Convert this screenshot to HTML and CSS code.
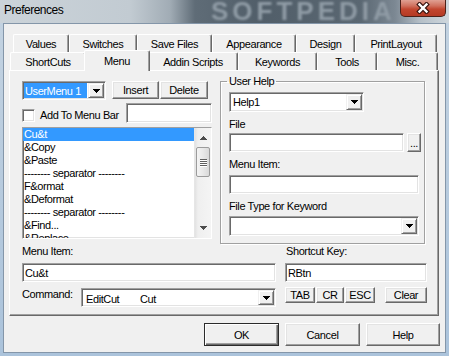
FILE: index.html
```html
<!DOCTYPE html>
<html lang="en">
<head>
    <meta charset="UTF-8">
    <title>Preferences</title>
    <link rel="stylesheet" href="styles.css">
</head>
<body>
<div class="window">
    <div class="titlebar">
        <span class="title">Preferences</span>
        <span class="bg-mark">SOFTPEDIA</span>
        <span class="close-btn">
            <svg width="14" height="12" viewBox="0 0 14 12">
                <path d="M3.5 2.5l7 7M10.5 2.5l-7 7" stroke="#3b1510" stroke-width="4.6" stroke-linecap="square"/>
                <path d="M3.5 2.5l7 7M10.5 2.5l-7 7" stroke="#fff" stroke-width="2.4" stroke-linecap="square"/>
            </svg>
        </span>
    </div>

    <div class="client">
        <div class="tabs">
            <div class="tab-row back">
                <div class="tab">Values</div>
                <div class="tab">Switches</div>
                <div class="tab">Save Files</div>
                <div class="tab">Appearance</div>
                <div class="tab">Design</div>
                <div class="tab">PrintLayout</div>
            </div>
            <div class="tab-row front">
                <div class="tab">ShortCuts</div>
                <div class="tab active">Menu</div>
                <div class="tab">Addin Scripts</div>
                <div class="tab">Keywords</div>
                <div class="tab">Tools</div>
                <div class="tab">Misc.</div>
            </div>

            <div class="tab-panel">
                <div class="upper">
                    <div class="left-col">
                        <div class="menu-row">
                            <div class="field combo usermenu">
                                <span class="combo-text"><span class="sel">UserMenu 1</span></span>
                                <span class="drop"><svg width="7" height="4"><path d="M0 0h7v1h-1v1h-1v1h-1v1h-1v-1h-1v-1h-1v-1h-1z"/></svg></span>
                            </div>
                            <button class="btn insert">Insert</button>
                            <button class="btn delete">Delete</button>
                        </div>
                        <div class="bar-row">
                            <span class="field checkbox"></span>
                            <span class="check-label">Add To Menu Bar</span>
                            <div class="field bar-name"></div>
                        </div>
                        <div class="field listbox">
                            <ul class="items">
                                <li class="selected">Cu&amp;t</li>
                                <li>&amp;Copy</li>
                                <li>&amp;Paste</li>
                                <li>-------- separator --------</li>
                                <li>F&amp;ormat</li>
                                <li>&amp;Deformat</li>
                                <li>-------- separator --------</li>
                                <li>&amp;Find...</li>
                                <li>&amp;Replace</li>
                            </ul>
                            <div class="scrollbar">
                                <div class="sb-btn"><svg width="7" height="4"><path d="M3 0h1v1h1v1h1v1h1v1h-7v-1h1v-1h1v-1h1z"/></svg></div>
                                <div class="sb-thumb"><span></span><span></span><span></span><span></span></div>
                                <div class="sb-btn down"><svg width="7" height="4"><path d="M0 0h7v1h-1v1h-1v1h-1v1h-1v-1h-1v-1h-1v-1h-1z"/></svg></div>
                            </div>
                        </div>
                    </div>

                    <fieldset class="group">
                        <legend>User Help</legend>
                        <div class="field combo help-combo">
                            <span class="combo-text">Help1</span>
                            <span class="drop"><svg width="7" height="4"><path d="M0 0h7v1h-1v1h-1v1h-1v1h-1v-1h-1v-1h-1v-1h-1z"/></svg></span>
                        </div>
                        <div class="label">File</div>
                        <div class="file-row">
                            <div class="field file-box"></div>
                            <button class="btn browse">...</button>
                        </div>
                        <div class="label">Menu Item:</div>
                        <div class="field wide-box"></div>
                        <div class="label">File Type for Keyword</div>
                        <div class="field combo type-combo">
                            <span class="combo-text"></span>
                            <span class="drop"><svg width="7" height="4"><path d="M0 0h7v1h-1v1h-1v1h-1v1h-1v-1h-1v-1h-1v-1h-1z"/></svg></span>
                        </div>
                    </fieldset>
                </div>

                <div class="lower">
                    <div class="label">Menu Item:</div>
                    <div class="label key-label">Shortcut Key:</div>
                    <div class="field text-box">Cu&amp;t</div>
                    <div class="field text-box">RBtn</div>
                    <div class="command">
                        <span class="cmd-label">Command:</span>
                        <div class="field combo cmd-combo">
                            <span class="combo-text"><span class="cmd-name">EditCut</span><span>Cut</span></span>
                            <span class="drop"><svg width="7" height="4"><path d="M0 0h7v1h-1v1h-1v1h-1v1h-1v-1h-1v-1h-1v-1h-1z"/></svg></span>
                        </div>
                    </div>
                    <div class="keys">
                        <button class="btn key-tab">TAB</button>
                        <button class="btn key-cr">CR</button>
                        <button class="btn key-esc">ESC</button>
                        <button class="btn key-clear">Clear</button>
                    </div>
                </div>
            </div>
        </div>

        <div class="dialog-buttons">
            <button class="btn dlg default">OK</button>
            <button class="btn dlg">Cancel</button>
            <button class="btn dlg help">Help</button>
        </div>
    </div>
</div>
</body>
</html>
```

FILE: styles.css
```css
/* General styles */
* {
    box-sizing: border-box;
}
body {
    margin: 0;
    font-family: "Liberation Sans", Arial, sans-serif;
    font-size: 11px;
    letter-spacing: -0.4px;
    color: #000;
}
.window {
    width: 449px;
    height: 356px;
    display: flex;
    flex-direction: column;
    background: linear-gradient(to bottom, #c4d3e1, #abc3db);
    overflow: hidden;
}

/* Title bar */
.titlebar {
    position: relative;
    height: 23px;
    flex: none;
    display: flex;
    align-items: flex-start;
    background: linear-gradient(to right, #cbd3d9 0, #c2cbd2 130px, #a1acb5 170px, #5f6c77 195px, #515e69 260px, #5a6772 360px, #7c8893 395px, #b5bfc7 420px, #cfd7dd 449px);
    overflow: hidden;
}
.title {
    position: relative;
    z-index: 1;
    font-size: 12px;
    letter-spacing: -0.5px;
    line-height: 13px;
    padding: 4px 0 0 4px;
}
.bg-mark {
    position: absolute;
    left: 211px;
    top: 0;
    font-size: 26px;
    line-height: 23px;
    font-weight: bold;
    letter-spacing: 4px;
    color: #8f9ba5;
    filter: blur(1px);
}
.close-btn {
    position: relative;
    z-index: 1;
    margin: -1px 3px 0 auto;
    width: 46px;
    height: 18px;
    border: 1px solid #4d2119;
    border-top: none;
    border-radius: 0 0 5px 5px;
    background: linear-gradient(to bottom, #e3a99c, #d0715e 40%, #c2462f 60%, #b53a24);
    display: flex;
    align-items: center;
    justify-content: center;
}

/* Client area */
.client {
    flex: 1;
    margin: 0 3px 3px;
    border: 1px solid #8496a9;
    background: #f0f0f0;
    display: flex;
    flex-direction: column;
    padding: 10px 5px 0 5px;
}
.tabs {
    width: 430px;
}
.tab-row {
    display: grid;
    height: 18px;
}
.tab-row.back {
    grid-template-columns: 56px 68px 75px 84px 59px 82px;
    margin-left: 4px;
}
.tab-row.front {
    grid-template-columns: 76px 62px 90px 79px 60px 61px;
    margin-left: 1px;
}
.tab {
    display: flex;
    align-items: center;
    justify-content: center;
    padding-top: 1px;
    background: #f0f0f0;
    border-top: 1px solid #fff;
    border-left: 1px solid #fff;
    border-right: 1px solid #696969;
    box-shadow: inset -1px 0 0 #a0a0a0;
    border-radius: 2px 2px 0 0;
    white-space: nowrap;
}
.tab.active {
    position: relative;
    z-index: 1;
    margin: -2px -2px -1px;
    padding-top: 0;
}
.tab-panel {
    height: 246px;
    border: 1px solid;
    border-color: #fff #696969 #696969 #fff;
    box-shadow: inset -1px -1px 0 #a0a0a0;
    padding: 10px 0 0 12px;
}

/* Common controls */
.field {
    background: #fff;
    border: 1px solid;
    border-color: #a0a0a0 #fff #fff #a0a0a0;
    box-shadow: inset 1px 1px 0 #696969, inset -1px -1px 0 #e3e3e3;
}
.combo {
    display: flex;
    padding: 1px;
}
.combo-text {
    flex: 1;
    display: flex;
    align-items: center;
    padding-left: 2px;
}
.drop {
    width: 16px;
    background: #f0f0f0;
    border: 1px solid;
    border-color: #f0f0f0 #696969 #696969 #f0f0f0;
    box-shadow: inset 1px 1px 0 #fff, inset -1px -1px 0 #a0a0a0;
    display: flex;
    align-items: center;
    justify-content: center;
}
.btn {
    font: inherit;
    letter-spacing: inherit;
    color: #000;
    background: #f0f0f0;
    border: 1px solid;
    border-color: #fff #696969 #696969 #fff;
    box-shadow: inset -1px -1px 0 #a0a0a0, inset 1px 1px 0 #e3e3e3;
    padding: 0;
    display: flex;
    align-items: center;
    justify-content: center;
}
.label {
    line-height: 13px;
    height: 13px;
}

/* Upper part */
.upper {
    display: flex;
    align-items: flex-start;
    gap: 8px;
    height: 163px;
}
.left-col {
    width: 190px;
    display: flex;
    flex-direction: column;
}
.menu-row {
    display: flex;
    align-items: flex-start;
    height: 19px;
}
.usermenu {
    width: 84px;
    height: 19px;
}
.usermenu .combo-text {
    padding-left: 0;
}
.usermenu .sel {
    flex: 1;
    align-self: stretch;
    display: flex;
    align-items: center;
    padding-left: 1px;
    margin-right: 1px;
    background: #3399ff;
    color: #fff;
}
.insert {
    width: 47px;
    height: 18px;
    margin-left: 6px;
}
.delete {
    width: 48px;
    height: 18px;
    margin-left: 1px;
}
.bar-row {
    display: flex;
    align-items: flex-start;
    height: 20px;
    margin-top: 3px;
}
.checkbox {
    width: 13px;
    height: 13px;
    margin-top: 6px;
}
.check-label {
    line-height: 13px;
    margin: 6px 0 0 5px;
}
.bar-name {
    width: 86px;
    height: 20px;
    margin-left: auto;
}
.listbox {
    display: flex;
    height: 112px;
    margin-top: 4px;
    overflow: hidden;
}
.items {
    flex: 1;
    list-style: none;
    margin: 0;
    padding: 0;
    overflow: hidden;
}
.items li {
    line-height: 13px;
    height: 13px;
    padding-left: 1px;
    white-space: nowrap;
}
.items li.selected {
    background: #3399ff;
    color: #fff;
}
.scrollbar {
    width: 17px;
    display: flex;
    flex-direction: column;
    background: linear-gradient(to right, #e2e2e2, #efefef 3px, #f4f4f4);
    border-left: 1px solid #e6e6e6;
}
.sb-btn {
    height: 17px;
    display: flex;
    justify-content: center;
    padding-top: 8px;
}
.sb-btn svg {
    fill: #4d4d4d;
}
.sb-btn.down {
    margin-top: auto;
    padding-top: 5px;
}
.sb-thumb {
    height: 30px;
    margin: 2px 1px 0;
    border: 1px solid #9b9b9b;
    border-radius: 2px;
    background: linear-gradient(to right, #f4f4f4, #e8e8e8 50%, #d9d9d9);
    display: flex;
    flex-direction: column;
    align-items: center;
    justify-content: center;
    gap: 1px;
}
.sb-thumb span {
    width: 7px;
    height: 1px;
    background: #5f5f5f;
    box-shadow: 0 1px 0 #fff;
}

/* User Help group */
.group {
    width: 205px;
    height: 169px;
    margin: -6px 0 0;
    padding: 0 0 0 8px;
    min-width: 0;
    border: 1px solid #a0a0a0;
    box-shadow: 1px 1px 0 #fff, inset 1px 1px 0 #fff;
}
.group legend {
    padding: 0 2px;
    margin-left: -2px;
    line-height: 12px;
}
.help-combo {
    width: 135px;
    height: 20px;
    margin-top: 5px;
}
.group .label {
    margin-top: 6px;
}
.file-row {
    display: flex;
    gap: 3px;
    margin-top: 2px;
}
.file-box {
    width: 175px;
    height: 19px;
}
.browse {
    width: 14px;
    height: 19px;
    align-items: flex-end;
    line-height: 12px;
    padding-bottom: 2px;
}
.wide-box {
    width: 190px;
    height: 19px;
    margin-top: 4px;
}
.type-combo {
    width: 190px;
    height: 20px;
    margin-top: 3px;
}

/* Lower part */
.lower {
    display: grid;
    grid-template-columns: 254px 142px;
    grid-template-rows: 13px 19px 19px;
    column-gap: 9px;
    row-gap: 5px;
    margin-top: 1px;
}
.key-label {
    padding-left: 1px;
}
.text-box {
    display: flex;
    align-items: center;
    padding-left: 2px;
}
.command {
    display: flex;
    align-items: flex-start;
}
.cmd-label {
    width: 59px;
    line-height: 13px;
    margin-top: 1px;
}
.cmd-combo {
    width: 195px;
    height: 19px;
    margin-top: 1px;
}
.cmd-combo .combo-text {
    padding: 2px 0 0 3px;
}
.cmd-name {
    width: 54px;
}
.keys {
    display: flex;
    align-items: flex-start;
    gap: 1px;
}
.keys .btn {
    height: 16px;
}
.key-tab,
.key-esc {
    width: 30px;
}
.key-cr {
    width: 28px;
}
.key-clear {
    width: 42px;
    margin-left: 9px;
}

/* Dialog buttons */
.dialog-buttons {
    display: flex;
    justify-content: flex-end;
    gap: 6px;
    margin-top: 7px;
}
.dlg {
    width: 75px;
    height: 23px;
}
.dlg.help {
    width: 74px;
}
.dlg.default {
    border: 1px solid #2b2b2b;
    box-shadow: inset 1px 1px 0 #fff, inset -1px -1px 0 #696969, inset -2px -2px 0 #a0a0a0;
}
```
